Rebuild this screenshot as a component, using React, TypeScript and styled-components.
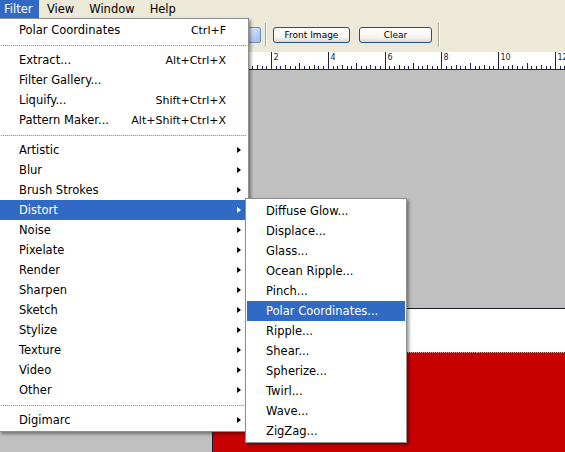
import styled, { createGlobalStyle } from 'styled-components';

const GlobalStyle = createGlobalStyle`
    html, body {
        margin: 0;
        padding: 0;
        width: 565px;
        height: 452px;
        overflow: hidden;
        background: #c0c0c0;
    }
`;

const UI_FONT = `'DejaVu Sans', Verdana, sans-serif`;
const HILITE = '#316ac5';

type MenuEntry =
    | { kind: 'sep' }
    | { kind: 'item'; label: string; shortcut?: string; sub?: boolean; active?: boolean };

const filterMenu: MenuEntry[] = [
    { kind: 'item', label: 'Polar Coordinates', shortcut: 'Ctrl+F' },
    { kind: 'sep' },
    { kind: 'item', label: 'Extract...', shortcut: 'Alt+Ctrl+X' },
    { kind: 'item', label: 'Filter Gallery...' },
    { kind: 'item', label: 'Liquify...', shortcut: 'Shift+Ctrl+X' },
    { kind: 'item', label: 'Pattern Maker...', shortcut: 'Alt+Shift+Ctrl+X' },
    { kind: 'sep' },
    ...['Artistic', 'Blur', 'Brush Strokes', 'Distort', 'Noise', 'Pixelate', 'Render', 'Sharpen', 'Sketch', 'Stylize', 'Texture', 'Video', 'Other'].map(
        (label): MenuEntry => ({ kind: 'item', label, sub: true, active: label === 'Distort' })
    ),
    { kind: 'sep' },
    { kind: 'item', label: 'Digimarc', sub: true },
];

const distortMenu = [
    'Diffuse Glow...',
    'Displace...',
    'Glass...',
    'Ocean Ripple...',
    'Pinch...',
    'Polar Coordinates...',
    'Ripple...',
    'Shear...',
    'Spherize...',
    'Twirl...',
    'Wave...',
    'ZigZag...',
];

const Page = styled.div`
    position: relative;
    width: 565px;
    height: 452px;
    overflow: hidden;
    font-family: ${UI_FONT};
    color: #000;
`;

/* ---------- menu bar ---------- */

const MenuBar = styled.div`
    display: flex;
    height: 18px;
    background: #ece9d8;
    font-size: 11.5px;
    line-height: 18px;
`;

const BarItem = styled.div<{ $open?: boolean }>`
    padding: 0 7.5px;
    background: ${(p) => (p.$open ? HILITE : 'transparent')};
    color: ${(p) => (p.$open ? '#fff' : '#000')};

    &:first-child {
        padding: 0 7px 0 4px;
    }
`;

/* ---------- options bar ---------- */

const OptionsBar = styled.div`
    display: flex;
    align-items: center;
    height: 34px;
    padding-left: 245px;
    background: #ece9d8;
`;

const ToolIcon = styled.div`
    width: 14px;
    height: 14px;
    border: 1px solid #6f8fc0;
    border-radius: 2px;
    background: linear-gradient(135deg, #e6f0fc, #9cbce8);
`;

const Divider = styled.div`
    width: 1px;
    height: 24px;
    margin: 0 6px 0 4px;
    background: #aca899;
    border-right: 1px solid #fff;

    &:last-child {
        margin-left: 6px;
    }
`;

const XPButton = styled.button<{ $w: number }>`
    box-sizing: border-box;
    width: ${(p) => p.$w}px;
    height: 16px;
    padding: 0;
    border: 1px solid #1d4f91;
    border-radius: 3px;
    background: linear-gradient(#ffffff, #f4f3ee 70%, #dcd8cb);
    font-family: ${UI_FONT};
    font-size: 9px;
    line-height: 14px;
    color: #000;

    & + & {
        margin-left: 9px;
    }
`;

/* ---------- ruler ---------- */

const RulerStrip = styled.div`
    height: 17px;
    background: #fff;
    border-bottom: 1px solid #23263a;

    svg {
        display: block;
    }
`;

const MAJOR = 56.8;
const ORIGIN = 214.2;

const Ruler = () => {
    const majors = Array.from({ length: 10 }, (_, i) => i - 3);
    return (
        <RulerStrip>
            <svg width={565} height={17} viewBox="0 0 565 17">
                {majors.map((k) => {
                    const x = Math.round(ORIGIN + k * MAJOR) + 0.5;
                    return (
                        <g key={k}>
                            <line x1={x} y1={0} x2={x} y2={17} stroke="#1c2440" strokeWidth={1} />
                            {/* labels left of the open menu are hidden anyway */}
                            {k >= 1 && (
                                <text x={x + 2} y={8} fontSize={8} fontFamily={UI_FONT} fill="#1c2440">
                                    {k * 2}
                                </text>
                            )}
                            {Array.from({ length: 11 }, (_, j) => {
                                const idx = j + 1;
                                const tx = Math.round(ORIGIN + k * MAJOR + (idx * MAJOR) / 12) + 0.5;
                                const h = idx === 6 ? 6 : idx % 3 === 0 ? 4 : 3;
                                return (
                                    <line key={idx} x1={tx} y1={17 - h} x2={tx} y2={17} stroke="#1c2440" strokeWidth={1} />
                                );
                            })}
                        </g>
                    );
                })}
            </svg>
        </RulerStrip>
    );
};

/* ---------- workspace / document ---------- */

const Workspace = styled.div`
    padding: 238px 0 0 212px;
    background: #c0c0c0;
`;

const DocumentImage = styled.div`
    border-top: 1px solid #1b1b2b;
    border-left: 1px solid #1b1b2b;
    background: #fff;
`;

const WhiteBand = styled.div`
    height: 43px;
`;

const RedFill = styled.div`
    height: 120px;
    background: #c90000;
    border-top: 1px solid transparent;
    border-image: repeating-linear-gradient(90deg, #7a3030 0 1px, #e0a0a0 1px 2px) 1;
`;

/* ---------- drop-down menus ---------- */

const MenuPanel = styled.div<{ $left: number; $top: number; $width: number; $padTop: number }>`
    position: absolute;
    left: ${(p) => p.$left}px;
    top: ${(p) => p.$top}px;
    width: ${(p) => p.$width}px;
    box-sizing: border-box;
    padding: ${(p) => p.$padTop}px 0 1px;
    background: #fff;
    border: 1px solid #8e8e8e;
    box-shadow: 2px 2px 3px rgba(0, 0, 0, 0.4);
    font-size: 11.5px;
`;

const Row = styled.div<{ $active?: boolean; $sub?: boolean; $inset: number; $pad: number }>`
    display: flex;
    align-items: center;
    justify-content: space-between;
    height: 20px;
    margin: 0 ${(p) => p.$inset}px;
    padding: 0 ${(p) => (p.$sub ? 7 : 22)}px 0 ${(p) => p.$pad}px;
    background: ${(p) => (p.$active ? HILITE : 'transparent')};
    color: ${(p) => (p.$active ? '#fff' : '#000')};
    white-space: nowrap;
`;

const Shortcut = styled.span`
    font-size: 11px;
`;

const SubArrow = styled.span`
    width: 0;
    height: 0;
    border-left: 4px solid currentColor;
    border-top: 3.5px solid transparent;
    border-bottom: 3.5px solid transparent;
`;

const Separator = styled.div`
    height: 10px;
    display: flex;
    align-items: center;
    padding: 0 1px;

    &::after {
        content: '';
        flex: 1;
        height: 1px;
        background: repeating-linear-gradient(90deg, #9a9a9a 0 1px, #dedede 1px 2px);
    }
`;

export default function App() {
    return (
        <Page>
            <GlobalStyle />

            <MenuBar>
                <BarItem $open>Filter</BarItem>
                <BarItem>View</BarItem>
                <BarItem>Window</BarItem>
                <BarItem>Help</BarItem>
            </MenuBar>

            <OptionsBar>
                <ToolIcon />
                <Divider />
                <XPButton $w={77}>Front Image</XPButton>
                <XPButton $w={73}>Clear</XPButton>
                <Divider />
            </OptionsBar>

            <Ruler />

            <Workspace>
                <DocumentImage>
                    <WhiteBand />
                    <RedFill />
                </DocumentImage>
            </Workspace>

            <MenuPanel $left={-1} $top={18} $width={250} $padTop={1}>
                {filterMenu.map((entry, i) =>
                    entry.kind === 'sep' ? (
                        // eslint-disable-next-line react/no-array-index-key
                        <Separator key={i} />
                    ) : (
                        <Row key={entry.label} $active={entry.active} $sub={entry.sub} $inset={0} $pad={19}>
                            <span>{entry.label}</span>
                            {entry.shortcut && <Shortcut>{entry.shortcut}</Shortcut>}
                            {entry.sub && <SubArrow />}
                        </Row>
                    )
                )}
            </MenuPanel>

            <MenuPanel $left={245} $top={198} $width={162} $padTop={2}>
                {distortMenu.map((label) => (
                    <Row key={label} $active={label === 'Polar Coordinates...'} $inset={1} $pad={19}>
                        <span>{label}</span>
                    </Row>
                ))}
            </MenuPanel>
        </Page>
    );
}
